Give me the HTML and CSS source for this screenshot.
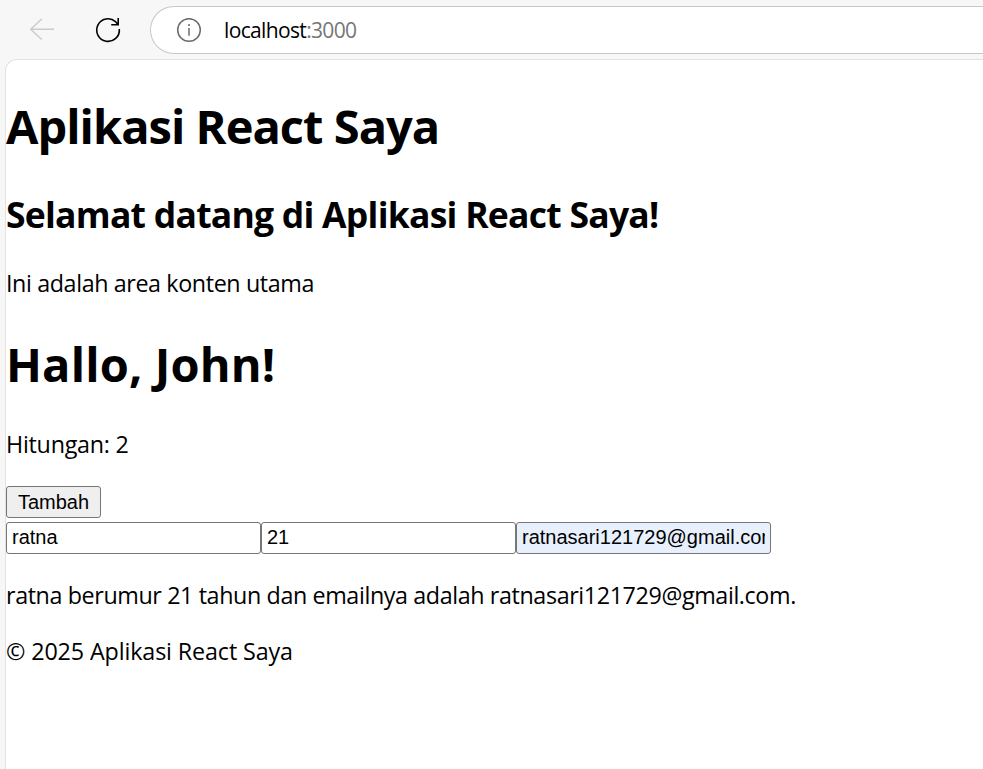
FILE: index.html
```html
<!DOCTYPE html>
<html lang="id">
<head>
<meta charset="utf-8">
<title>Aplikasi React Saya</title>
<link rel="stylesheet" href="styles.css">
</head>
<body>
<header class="toolbar">
  <svg class="back" width="26" height="23" viewBox="0 0 26 23"><path d="M25 11.300H1.500M12.700 1L1.700 11.300L12.700 21.600"/></svg>
  <svg class="reload" width="28" height="29" viewBox="0 0 28 29"><path d="M25.300 14A11.300 11.300 0 1 1 21.500 6.600L24 9.700M24.200 3V9.700H17.200"/></svg>
  <div class="address">
    <svg class="info" width="26" height="26" viewBox="0 0 26 26"><circle cx="13" cy="13" r="11.300"/><path d="M13 11V18.700"/><circle class="dot" cx="13" cy="8" r="1.100"/></svg>
    <span class="url"><span class="host">localhost</span>:3000</span>
  </div>
</header>
<main class="page">
  <h1>Aplikasi React Saya</h1>
  <h2>Selamat datang di Aplikasi React Saya!</h2>
  <p class="intro">Ini adalah area konten utama</p>
  <h1 class="hello">Hallo, John!</h1>
  <p class="count">Hitungan: 2</p>
  <button class="add">Tambah</button>
  <form class="fields">
    <input value="ratna"><input value="21"><input class="filled" value="ratnasari121729@gmail.com">
  </form>
  <p class="summary">ratna berumur 21 tahun dan emailnya adalah ratnasari121729@gmail.com.</p>
  <p class="footer">© 2025 Aplikasi React Saya</p>
</main>
</body>
</html>
```
FILE: styles.css
```css
* { box-sizing: border-box; }
body { margin: 0; height: 769px; overflow: hidden; background: #f7f7f7; color: #000; font-family: "Segoe UI", "Open Sans", "Noto Sans", sans-serif; display: flex; flex-direction: column; }
.toolbar { height: 59px; flex: none; display: flex; align-items: center; padding-left: 29px; }
.toolbar svg { fill: none; flex: none; }
.back { stroke: #cbcbcb; stroke-width: 1.4; }
.reload { margin-left: 39px; stroke: #000; stroke-width: 1.6; }
.address { margin-left: 28px; flex: 1; height: 48px; margin-top: 1px; border: 1px solid #c8c8c8; border-right: 0; border-radius: 24px 0 0 24px; background: #fff; display: flex; align-items: center; padding-left: 25px; }
.info { stroke: #6b6b6b; stroke-width: 1.5; }
.info .dot { fill: #6b6b6b; stroke: none; }
.url { margin-left: 22px; font-size: 21px; letter-spacing: -0.65px; color: #767676; }
.host { color: #000; }
.page { flex: 1; margin-left: 5px; background: #fff; border: 1px solid #e2e2e2; border-right: 0; border-bottom: 0; border-top-left-radius: 12px; }
h1, h2, p { margin: 0; white-space: nowrap; }
h1 { font-size: 47px; line-height: 64px; letter-spacing: -0.97px; margin-top: 34px; }
h2 { font-size: 35.5px; line-height: 48px; letter-spacing: -0.75px; margin-top: 32px; }
p { font-size: 23.3px; line-height: 32px; letter-spacing: -0.39px; }
.intro { margin-top: 29px; }
.hello { margin-top: 33px; letter-spacing: 0.15px; }
.count { margin-top: 32px; letter-spacing: -0.25px; }
.add { display: block; margin-top: 26px; width: 95px; height: 32px; padding: 0; border: 1px solid #767676; border-radius: 3px; background: #efefef; font: 20px "Liberation Sans", sans-serif; color: #000; }
.fields { display: flex; margin-top: 4px; }
input { width: 255px; height: 32px; padding: 0 5px 2px; border: 1px solid #767676; border-radius: 3px; font: 20px "Liberation Sans", sans-serif; color: #000; background: #fff; }
.filled { background: #e8f0fe; }
.summary { margin-top: 25px; }
.footer { margin-top: 24px; letter-spacing: -0.12px; }
```
